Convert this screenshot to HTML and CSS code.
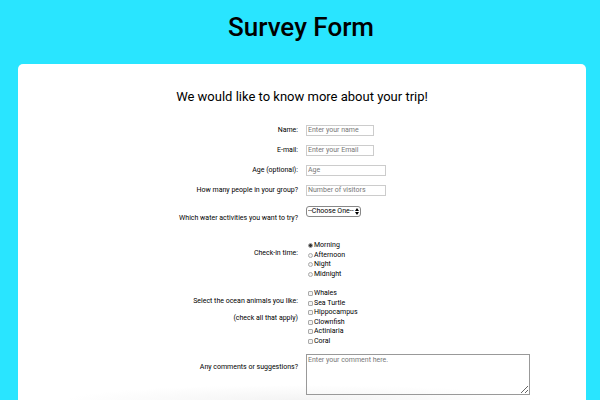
FILE: index.html
```html
<!DOCTYPE html>
<html lang="en">
<head>
<meta charset="utf-8">
<meta name="viewport" content="width=device-width, initial-scale=1">
<title>Survey Form</title>
<link rel="stylesheet" href="styles.css">
</head>
<body>
<h1 class="title">Survey Form</h1>
<main class="card">
  <p class="intro">We would like to know more about your trip!</p>
  <form class="survey">
    <div class="row">
      <label class="label" for="name">Name:</label>
      <div><input class="field" id="name" type="text" placeholder="Enter your name"></div>
    </div>
    <div class="row">
      <label class="label" for="email">E-mail:</label>
      <div><input class="field" id="email" type="email" placeholder="Enter your Email"></div>
    </div>
    <div class="row">
      <label class="label" for="age">Age (optional):</label>
      <div><input class="field field-wide" id="age" type="number" placeholder="Age"></div>
    </div>
    <div class="row">
      <label class="label" for="group">How many people in your group?</label>
      <div><input class="field field-wide" id="group" type="number" placeholder="Number of visitors"></div>
    </div>
    <div class="row row-select">
      <label class="label" for="activity">Which water activities you want to try?</label>
      <div class="select-wrap">
        <select class="select" id="activity"><option>--Choose One--</option></select>
        <svg class="arrows" viewBox="0 0 4 7" aria-hidden="true"><path d="M0 3 2 0l2 3zM0 4h4L2 7z"/></svg>
      </div>
    </div>
    <div class="row row-time" role="radiogroup" aria-labelledby="time-label">
      <div class="label" id="time-label">Check-in time:</div>
      <div class="options options-time">
        <label class="option"><input class="tick radio" type="radio" name="time" checked>Morning</label>
        <label class="option"><input class="tick radio" type="radio" name="time">Afternoon</label>
        <label class="option"><input class="tick radio" type="radio" name="time">Night</label>
        <label class="option"><input class="tick radio" type="radio" name="time">Midnight</label>
      </div>
    </div>
    <div class="row row-animals" role="group" aria-labelledby="animal-label">
      <div class="label label-pair" id="animal-label"><span>Select the ocean animals you like:</span><span>(check all that apply)</span></div>
      <div class="options options-animals">
        <label class="option"><input class="tick" type="checkbox">Whales</label>
        <label class="option"><input class="tick" type="checkbox">Sea Turtle</label>
        <label class="option"><input class="tick" type="checkbox">Hippocampus</label>
        <label class="option"><input class="tick" type="checkbox">Clownfish</label>
        <label class="option"><input class="tick" type="checkbox">Actiniaria</label>
        <label class="option"><input class="tick" type="checkbox">Coral</label>
      </div>
    </div>
    <div class="row row-comment">
      <label class="label" for="comment">Any comments or suggestions?</label>
      <textarea class="comment" id="comment" placeholder="Enter your comment here."></textarea>
    </div>
  </form>
</main>
</body>
</html>
```
FILE: styles.css
```css
* {
  box-sizing: border-box;
}

html {
  height: 100%;
  overflow: hidden;
}

body {
  display: flex;
  flex-direction: column;
  min-height: 100%;
  margin: 0;
  background: #29e5ff;
  color: #000;
  font: 7px/10px Roboto, "Liberation Sans", sans-serif;
}

input,
select,
textarea {
  margin: 0;
  font: inherit;
}

.title {
  margin: 0;
  padding: 10px 0 20px 2px;
  font-size: 26px;
  font-weight: 500;
  line-height: 34px;
  text-align: center;
}

.card {
  flex: 1;
  margin: 0 14px 0 18px;
  padding: 23px 0 6px;
  border-radius: 5px 5px 0 0;
  background: radial-gradient(ellipse 42% 16px at 50% 100%, #f3f3f3, #fff) #fff;
}

.intro {
  margin: 0 0 13px;
  font-size: 13px;
  line-height: 20px;
  text-align: center;
}

.row {
  display: grid;
  grid-template-columns: 1fr 1fr;
  column-gap: 8px;
  align-items: center;
  min-height: 20px;
}

.label {
  text-align: right;
}

.field {
  display: block;
  width: 68px;
  height: 11px;
  padding: 0 1px;
  border: 1px solid #ccc;
  background: #fff;
  appearance: textfield;
}

.field-wide {
  width: 80px;
}

::placeholder {
  color: #777;
  opacity: 1;
}

.row-select {
  align-items: start;
  min-height: 41px;
  padding-top: 6px;
}

.row-select .label {
  padding-top: 7px;
}

.select-wrap {
  position: relative;
  width: 55px;
}

.select {
  display: block;
  width: 100%;
  height: 11px;
  padding: 0 1px;
  border: 1px solid #888;
  border-radius: 3px;
  background: #fff;
  color: #000;
  line-height: 9px;
  appearance: none;
}

.arrows {
  position: absolute;
  top: 2px;
  right: 2px;
  width: 4px;
  height: 7px;
  pointer-events: none;
}

.row-time,
.row-animals {
  align-items: start;
}

.row-time .label,
.row-animals .label {
  padding-top: 7px;
}

.options {
  display: grid;
  grid-auto-rows: 1fr;
}

.options-time {
  height: 38px;
}

.options-animals {
  height: 57px;
}

.option {
  display: flex;
  align-items: center;
  justify-self: start;
  gap: 1px;
  padding-left: 2px;
  line-height: 9px;
}

.tick {
  width: 5px;
  height: 5px;
  border: 1px solid #aaa;
  border-radius: 1px;
  background: #f4f4f4;
  appearance: none;
}

.radio {
  border-radius: 50%;
}

.radio:checked {
  background: #333;
}

.row-animals {
  margin-top: 10px;
}

.label-pair {
  display: grid;
  gap: 7px;
}

.row-comment {
  align-items: start;
  margin-top: 8px;
}

.row-comment .label {
  padding-top: 8px;
}

.comment {
  display: block;
  width: 80%;
  height: 41px;
  padding: 0 1px;
  border: 1px solid #999;
  background: transparent;
  resize: both;
}
```
